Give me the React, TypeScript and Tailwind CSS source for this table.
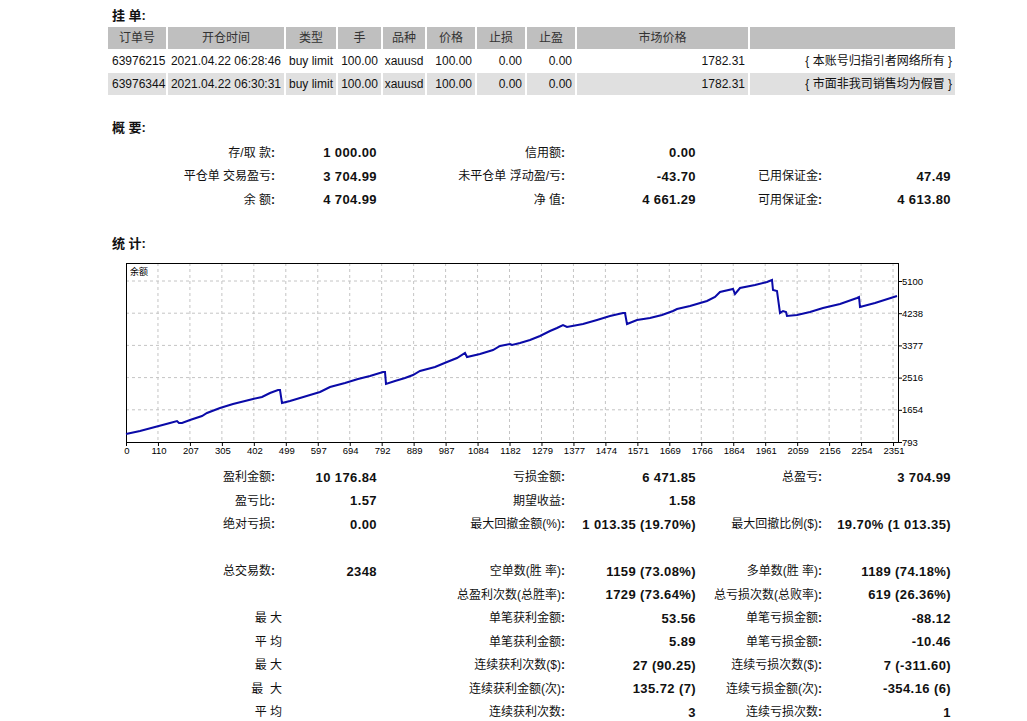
import React from "react";

const ORDERS = [
  ["63976215", "2021.04.22 06:28:46", "buy limit", "100.00", "xauusd", "100.00", "0.00", "0.00", "1782.31", "{ 本账号归指引者网络所有 }"],
  ["63976344", "2021.04.22 06:30:31", "buy limit", "100.00", "xauusd", "100.00", "0.00", "0.00", "1782.31", "{ 市面非我司销售均为假冒 }"],
];

const HEADERS = ["订单号", "开仓时间", "类型", "手", "品种", "价格", "止损", "止盈", "市场价格", ""];
const COLS = "grid-cols-[58px_116px_50px_43px_42px_48px_48px_48px_171px_205px]";

const SUMMARY = [
  ["存/取 款", "1 000.00", "信用额", "0.00", "", ""],
  ["平仓单 交易盈亏", "3 704.99", "未平仓单 浮动盈/亏", "-43.70", "已用保证金", "47.49"],
  ["余 额", "4 704.99", "净 值", "4 661.29", "可用保证金", "4 613.80"],
];

// null = empty spacer row; a label without colon is written with a leading "~"
const STATS: (string[] | null)[] = [
  ["盈利金额", "10 176.84", "亏损金额", "6 471.85", "总盈亏", "3 704.99"],
  ["盈亏比", "1.57", "期望收益", "1.58", "", ""],
  ["绝对亏损", "0.00", "最大回撤金额(%)", "1 013.35 (19.70%)", "最大回撤比例($)", "19.70% (1 013.35)"],
  null,
  ["总交易数", "2348", "空单数(胜 率)", "1159 (73.08%)", "多单数(胜 率)", "1189 (74.18%)"],
  ["", "", "总盈利次数(总胜率)", "1729 (73.64%)", "总亏损次数(总败率)", "619 (26.36%)"],
  ["~最 大", "", "单笔获利金额", "53.56", "单笔亏损金额", "-88.12"],
  ["~平 均", "", "单笔获利金额", "5.89", "单笔亏损金额", "-10.46"],
  ["~最 大", "", "连续获利次数($)", "27 (90.25)", "连续亏损次数($)", "7 (-311.60)"],
  ["~最  大", "", "连续获利金额(次)", "135.72 (7)", "连续亏损金额(次)", "-354.16 (6)"],
  ["~平 均", "", "连续获利次数", "3", "连续亏损次数", "1"],
];

const X_LABELS = ["0", "110", "207", "305", "402", "499", "597", "694", "792", "889", "987", "1084", "1182", "1279", "1377", "1474", "1571", "1669", "1766", "1864", "1961", "2059", "2156", "2254", "2351"];
const Y_LABELS = ["793", "1654", "2516", "3377", "4238", "5100"];

// balance curve, in page coordinates
const CURVE = [
  [126, 434], [140, 431], [155, 427], [170, 423], [177, 421], [179, 423], [182, 423], [190, 420], [202, 416], [207, 413],
  [220, 408], [233, 404], [245, 401], [253, 399], [262, 397], [270, 393], [278, 390], [280, 390], [282, 403], [290, 401],
  [300, 398], [310, 395], [320, 392], [330, 387], [345, 383], [358, 379], [370, 376], [383, 372], [385, 372], [386, 384],
  [395, 381], [405, 378], [413, 375], [420, 371], [435, 367], [447, 362], [457, 358], [465, 353], [467, 357], [480, 354],
  [493, 350], [500, 346], [510, 344], [512, 345], [520, 343], [530, 340], [540, 336], [550, 331], [557, 328], [563, 325],
  [567, 327], [583, 324], [597, 320], [610, 316], [623, 313], [625, 313], [627, 324], [637, 320], [650, 318], [662, 315],
  [673, 311], [677, 309], [690, 306], [707, 301], [715, 297], [720, 292], [733, 289], [735, 294], [740, 288], [755, 285],
  [767, 282], [772, 280], [773, 290], [777, 291], [780, 313], [783, 311], [786, 312], [787, 316], [797, 315], [810, 312],
  [823, 308], [840, 304], [857, 298], [859, 297], [860, 307], [875, 303], [897, 296],
];

function Heading({ children }: { children: React.ReactNode }) {
  return <div className="h-[20px] pl-[4px] text-[13px] font-bold leading-[20px]">{children}</div>;
}

function Label({ text }: { text: string }) {
  if (!text) return <div />;
  if (text.startsWith("~"))
    return <div className="mr-[-7px] whitespace-pre text-right">{text.slice(1)}</div>;
  return (
    <div className="text-right">
      {text}
      <span className="font-bold">:</span>
    </div>
  );
}

function Value({ text }: { text: string }) {
  return <div className="text-right text-[13px] font-bold tracking-[0.4px]">{text}</div>;
}

function InfoRow({ row }: { row: string[] | null }) {
  const cls = "grid h-[23.5px] grid-cols-[167px_102px_188px_131px_126px_129px] items-center";
  if (!row) return <div className={cls} />;
  return (
    <div className={cls}>
      <Label text={row[0]} />
      <Value text={row[1]} />
      <Label text={row[2]} />
      <Value text={row[3]} />
      <Label text={row[4]} />
      <Value text={row[5]} />
    </div>
  );
}

function BalanceChart() {
  const L = 18, R = 790, T = 5, B = 184;
  const xs = X_LABELS.map((_, i) => L + i * 31.96);
  const ys = Y_LABELS.map((_, j) => B - j * 32.2);
  const pts = CURVE.map(([x, y]) => `${x - 108},${y - 258}`).join(" ");
  return (
    <svg width="847" height="208" className="block" fontFamily="Liberation Sans, Noto Sans CJK SC, sans-serif">
      {xs.slice(1).map((x) => (
        <line key={x} x1={x} x2={x} y1={T} y2={B} stroke="#c4c4c4" strokeDasharray="3 3" />
      ))}
      {ys.slice(1).map((y) => (
        <line key={y} x1={L} x2={R} y1={y} y2={y} stroke="#c4c4c4" strokeDasharray="3 3" />
      ))}
      <rect x={L + 0.5} y={T + 0.5} width={R - L} height={B - T} fill="none" stroke="#000" />
      {xs.map((x) => (
        <line key={"t" + x} x1={x + 0.5} x2={x + 0.5} y1={B} y2={B + 4} stroke="#000" />
      ))}
      {ys.map((y) => (
        <line key={"r" + y} x1={R} x2={R + 4} y1={y + 0.5} y2={y + 0.5} stroke="#000" />
      ))}
      <polyline points={pts} fill="none" stroke="#0a0aa8" strokeWidth="2" strokeLinejoin="miter" />
      <text x={22} y={17} fontSize="9" fill="#000">余额</text>
      {X_LABELS.map((t, i) => (
        <text key={t} x={xs[i] + 1} y={196} fontSize="9.5" textAnchor="middle" fill="#000">
          {t}
        </text>
      ))}
      {Y_LABELS.map((t, j) => (
        <text key={t} x={794} y={ys[j] + 3.5} fontSize="9.5" fill="#000">
          {t}
        </text>
      ))}
    </svg>
  );
}

export default function App() {
  return (
    <div className="min-h-screen bg-white font-['Liberation_Sans','Noto_Sans_CJK_SC',sans-serif] text-[12px] text-[#111]">
      <div className="ml-[108px] w-[847px] pt-[6px]">
        <Heading>挂 单:</Heading>
        {/* 挂单表 */}
        <div className="mt-[1px] flex flex-col gap-y-px">
          <div className={`grid ${COLS} gap-x-[2px]`}>
            {HEADERS.map((h, i) => (
              <div key={i} className="flex h-[22px] items-center justify-center bg-[#bfbfbf] text-[#333]">
                {h}
              </div>
            ))}
          </div>
          {ORDERS.map((r, ri) => (
            <div key={r[0]} className={`grid ${COLS} gap-x-[2px]`}>
              {r.map((c, i) => (
                <div
                  key={i}
                  className={`flex h-[22px] items-center whitespace-nowrap ${ri === 1 ? "bg-[#e0e0e0]" : "bg-white"}
                    ${i === 0 ? "justify-start pl-[4px]" : i < 5 ? "justify-center" : "justify-end pr-[3px]"}`}
                >
                  {c}
                </div>
              ))}
            </div>
          ))}
        </div>

        <div className="mt-[23px]">
          <Heading>概 要:</Heading>
        </div>
        <div className="mt-[3px]">
          {SUMMARY.map((r, i) => (
            <InfoRow key={i} row={r} />
          ))}
        </div>

        <div className="mt-[22px]">
          <Heading>统 计:</Heading>
        </div>
        <div className="mt-[4px]">
          <BalanceChart />
        </div>
        <div>
          {STATS.map((r, i) => (
            <InfoRow key={i} row={r} />
          ))}
        </div>
      </div>
    </div>
  );
}
